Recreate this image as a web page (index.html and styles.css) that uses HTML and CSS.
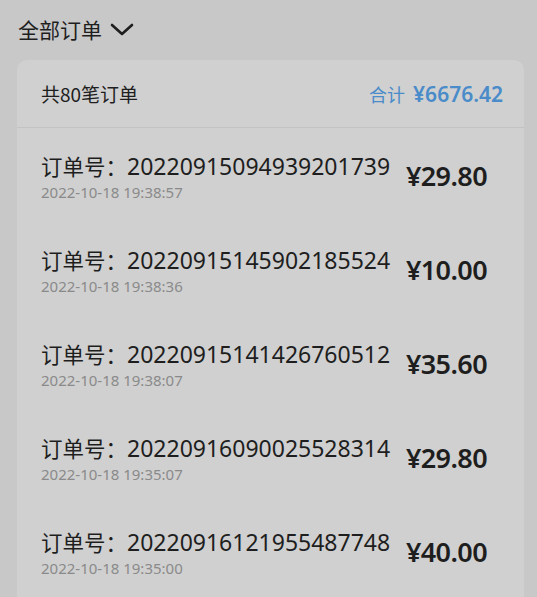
FILE: index.html
```html
<!DOCTYPE html>
<html lang="zh">
<head>
<meta charset="utf-8">
<link rel="stylesheet" href="styles.css">
</head>
<body>
<div class="page">
  <div class="title-bar">
    <span class="title">全部订单</span>
    <svg class="chev" width="24" height="14" viewBox="0 0 24 14"><path d="M2 2 L12 11 L22 2" fill="none" stroke="#1e1e1e" stroke-width="2.6" stroke-linecap="round" stroke-linejoin="round"/></svg>
  </div>
  <div class="card">
    <div class="card-head">
      <span class="count">共80笔订单</span>
      <span class="total"><span class="total-label">合计</span><span class="total-amt">¥6676.42</span></span>
    </div>
    <div class="rows">
      <div class="row">
        <div class="info">
          <div class="order"><span class="label">订单号：</span><span class="num">20220915094939201739</span></div>
          <div class="date">2022-10-18 19:38:57</div>
        </div>
        <div class="price">¥29.80</div>
      </div>
      <div class="row">
        <div class="info">
          <div class="order"><span class="label">订单号：</span><span class="num">20220915145902185524</span></div>
          <div class="date">2022-10-18 19:38:36</div>
        </div>
        <div class="price">¥10.00</div>
      </div>
      <div class="row">
        <div class="info">
          <div class="order"><span class="label">订单号：</span><span class="num">20220915141426760512</span></div>
          <div class="date">2022-10-18 19:38:07</div>
        </div>
        <div class="price">¥35.60</div>
      </div>
      <div class="row">
        <div class="info">
          <div class="order"><span class="label">订单号：</span><span class="num">20220916090025528314</span></div>
          <div class="date">2022-10-18 19:35:07</div>
        </div>
        <div class="price">¥29.80</div>
      </div>
      <div class="row">
        <div class="info">
          <div class="order"><span class="label">订单号：</span><span class="num">20220916121955487748</span></div>
          <div class="date">2022-10-18 19:35:00</div>
        </div>
        <div class="price">¥40.00</div>
      </div>
    </div>
  </div>
</div>
</body>
</html>
```

FILE: styles.css
```css
html, body {
  margin: 0;
  padding: 0;
  background: #c8c8c8;
  font-family: "Noto Sans", "Noto Sans CJK SC", sans-serif;
  color: #1e1e1e;
}
.page {
  width: 537px;
  height: 597px;
  overflow: hidden;
}
.title-bar {
  display: flex;
  align-items: center;
  height: 60px;
  padding-left: 18px;
  box-sizing: border-box;
  padding-bottom: 2px;
}
.title {
  font-family: "Noto Sans CJK SC", sans-serif;
  font-size: 21px;
  line-height: 26px;
}
.chev {
  margin-left: 8px;
  margin-top: 1px;
}
.card {
  margin-left: 17px;
  width: 507px;
  background: #d0d0d0;
  border-radius: 10px 10px 0 0;
}
.card-head {
  height: 68px;
  display: flex;
  align-items: center;
  justify-content: space-between;
  padding: 0 21px 0 24px;
  border-bottom: 1px solid #c3c3c3;
  box-sizing: border-box;
}
.count {
  font-family: "Noto Sans CJK SC", sans-serif;
  font-size: 19px;
}
.total {
  color: #4a8bc9;
  display: flex;
  align-items: baseline;
}
.total-label {
  font-family: "Noto Sans CJK SC", sans-serif;
  font-size: 18px;
  margin-right: 8px;
}
.total-amt {
  font-weight: 600;
  font-size: 21px;
}
.row {
  height: 94px;
  display: flex;
  align-items: center;
  justify-content: space-between;
  padding: 0 37px 0 24px;
}
.info {
  display: flex;
  flex-direction: column;
  margin-top: 4px;
}
.order {
  line-height: 26px;
  white-space: nowrap;
}
.label {
  font-family: "Noto Sans CJK SC", sans-serif;
  font-size: 21.5px;
}
.num {
  font-size: 23px;
}
.date {
  font-size: 15px;
  line-height: 20px;
  color: #8a8a8a;
}
.price {
  font-weight: 600;
  font-size: 27px;
  letter-spacing: -0.6px;
  margin-top: 1px;
}
```
